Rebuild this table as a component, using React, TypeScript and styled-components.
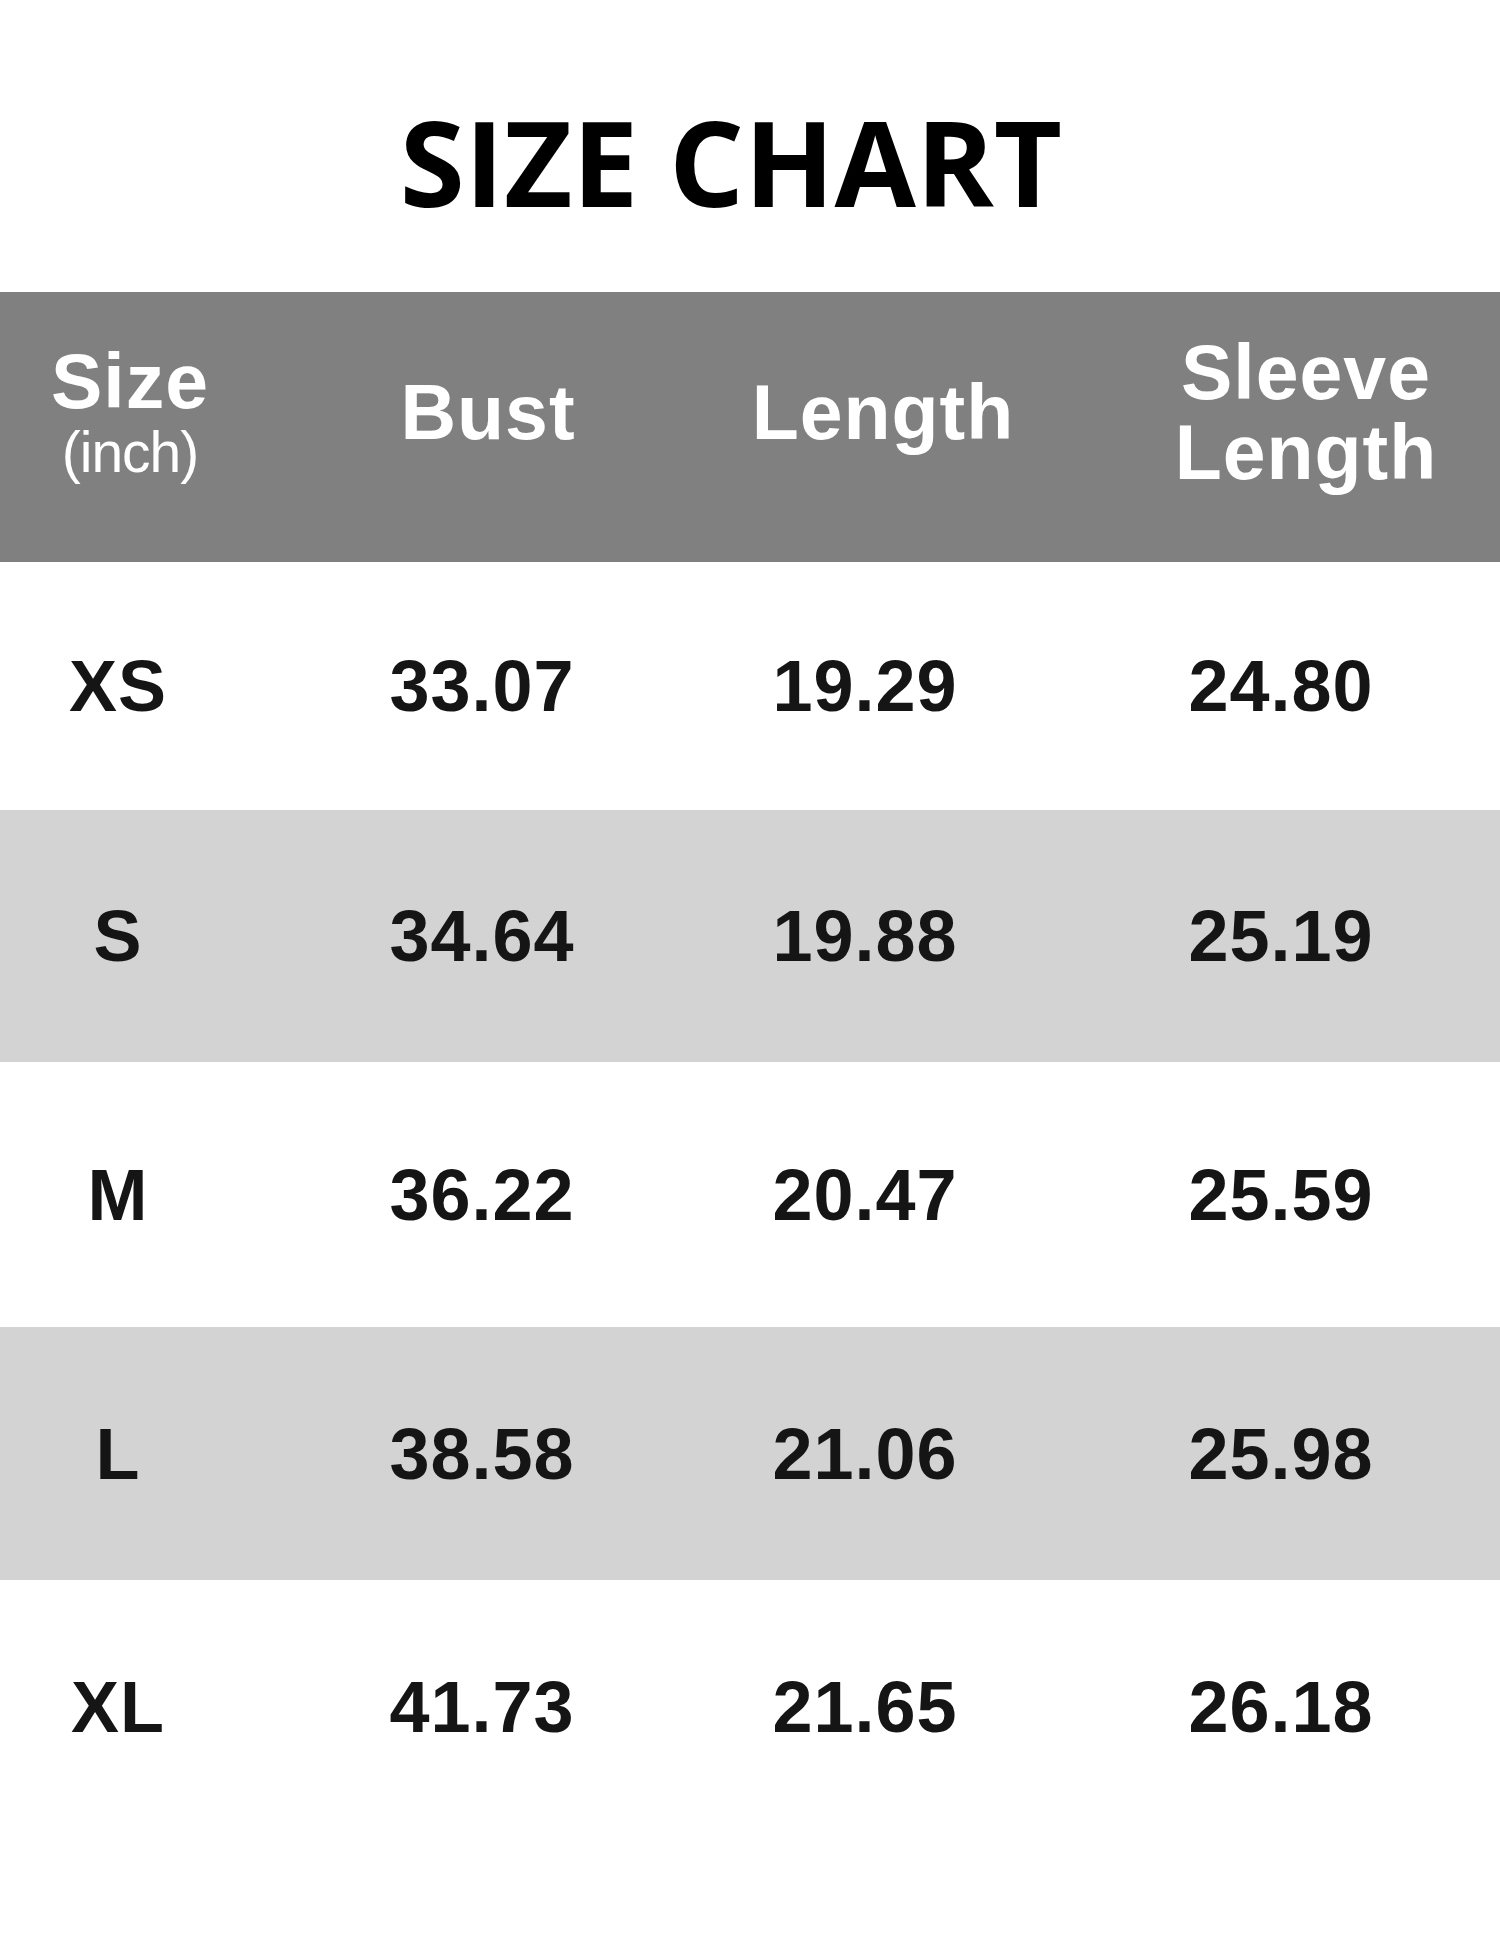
import React from 'react';
import styled, { createGlobalStyle } from 'styled-components';

type SizeRow = {
  size: string;
  bust: string;
  length: string;
  sleeve: string;
  height: number;
};

const rows: SizeRow[] = [
  { size: 'XS', bust: '33.07', length: '19.29', sleeve: '24.80', height: 248 },
  { size: 'S', bust: '34.64', length: '19.88', sleeve: '25.19', height: 252 },
  { size: 'M', bust: '36.22', length: '20.47', sleeve: '25.59', height: 265 },
  { size: 'L', bust: '38.58', length: '21.06', sleeve: '25.98', height: 253 },
  { size: 'XL', bust: '41.73', length: '21.65', sleeve: '26.18', height: 253 },
];

const GlobalStyle = createGlobalStyle`
  html, body {
    margin: 0;
    padding: 0;
    background: #ffffff;
  }
  body {
    font-family: "Liberation Sans", Arial, sans-serif;
  }
`;

const App: React.FC = () => (
  <>
    <GlobalStyle />
    <Page>
      <Title>SIZE CHART</Title>
      <Table>
        <HeaderRow>
          <HeadCell>
            <HeadMain>Size</HeadMain>
            <HeadUnit>(inch)</HeadUnit>
          </HeadCell>
          <HeadCell>
            <HeadMain>Bust</HeadMain>
          </HeadCell>
          <HeadCell>
            <HeadMain>Length</HeadMain>
          </HeadCell>
          <HeadCell>
            <HeadMain>Sleeve</HeadMain>
            <HeadMain>Length</HeadMain>
          </HeadCell>
        </HeaderRow>
        {rows.map((row, i) => (
          <BodyRow key={row.size} $striped={i % 2 === 1} $height={row.height}>
            <Cell>{row.size}</Cell>
            <Cell>{row.bust}</Cell>
            <Cell>{row.length}</Cell>
            <Cell>{row.sleeve}</Cell>
          </BodyRow>
        ))}
      </Table>
    </Page>
  </>
);

const Page = styled.div`
  width: 1500px;
  min-height: 1950px;
  background: #ffffff;
  padding-top: 102px;
  box-sizing: border-box;
`;

const Title = styled.h1`
  margin: 0 38px 71px 0;
  font-family: "Open Sans", "Noto Sans", sans-serif;
  font-weight: 700;
  font-size: 118px;
  line-height: 119px;
  letter-spacing: 0;
  text-align: center;
  color: #000000;
`;

const Table = styled.div`
  display: flex;
  flex-direction: column;
`;

const HeaderRow = styled.div`
  display: grid;
  grid-template-columns: 260px 328px 334px 384px;
  column-gap: 64px;
  align-items: center;
  height: 270px;
  padding-bottom: 30px;
  box-sizing: border-box;
  background: #808080;
  color: #ffffff;
`;

const HeadCell = styled.div`
  display: flex;
  flex-direction: column;
  align-items: center;
`;

const HeadMain = styled.span`
  font-weight: 700;
  font-size: 77px;
  line-height: 80px;
  letter-spacing: 1px;
`;

const HeadUnit = styled.span`
  font-weight: 400;
  font-size: 57px;
  line-height: 62px;
  letter-spacing: -1px;
`;

const BodyRow = styled.div<{ $striped: boolean; $height: number }>`
  display: grid;
  grid-template-columns: 236px 372px 274px 438px;
  column-gap: 60px;
  align-items: center;
  height: ${(p) => p.$height}px;
  background: ${(p) => (p.$striped ? '#d3d3d3' : '#ffffff')};
`;

const Cell = styled.div`
  text-align: center;
  font-weight: 700;
  font-size: 72px;
  line-height: 1;
  letter-spacing: 1px;
  color: #151515;
`;

export default App;
